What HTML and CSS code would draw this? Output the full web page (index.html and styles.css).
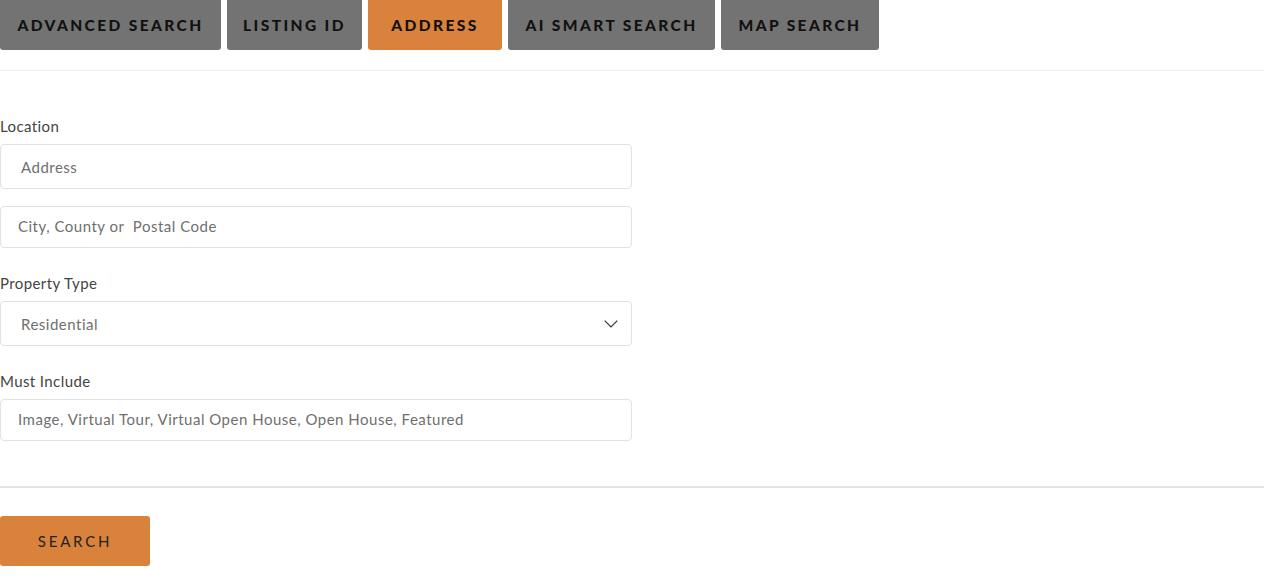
FILE: index.html
```html
<!DOCTYPE html>
<html lang="en">
<head>
<meta charset="utf-8">
<title>Search</title>
<link rel="stylesheet" href="styles.css">
</head>
<body>
<div class="page">
  <nav class="tabs">
    <a class="tab t1">ADVANCED SEARCH</a>
    <a class="tab t2">LISTING ID</a>
    <a class="tab t3 active">ADDRESS</a>
    <a class="tab t4">AI SMART SEARCH</a>
    <a class="tab t5">MAP SEARCH</a>
  </nav>
  <hr class="rule-top">
  <form class="form">
    <div class="group">
      <label class="label">Location</label>
      <div class="field tall"><span class="ph ph-indent">Address</span></div>
      <div class="field short gap"><span class="ph">City, County or &nbsp;Postal Code</span></div>
    </div>
    <div class="group">
      <label class="label">Property Type</label>
      <div class="field tall select">
        <span class="ph ph-indent">Residential</span>
        <svg class="chev" width="14" height="8" viewBox="0 0 14 8"><path d="M0.7 0.7 L7 7 L13.3 0.7" fill="none" stroke="#333" stroke-width="1.2"/></svg>
      </div>
    </div>
    <div class="group last">
      <label class="label">Must Include</label>
      <div class="field short"><span class="ph">Image, Virtual Tour, Virtual Open House, Open House, Featured</span></div>
    </div>
  </form>
  <hr class="rule-bottom">
  <button class="search-btn" type="button">SEARCH</button>
</div>
</body>
</html>
```
FILE: styles.css
```css
* { box-sizing: border-box; }
body {
  margin: 0;
  font-family: Lato, "Noto Sans", sans-serif;
  color: #333;
  background: #fff;
}
.tabs {
  display: flex;
  gap: 6px;
  height: 50px;
}
.tab {
  display: flex;
  align-items: center;
  justify-content: center;
  background: #737373;
  color: #111;
  font-weight: 900;
  font-size: 15.5px;
  letter-spacing: 2.4px;
  border-radius: 0 0 3px 3px;
}
.tab.active { background: #d8823c; }
.t1 { width: 221px; }
.t2 { width: 135px; }
.t3 { width: 134px; }
.t4 { width: 207px; }
.t5 { width: 158px; }
.rule-top {
  margin: 20px 0 0;
  border: 0;
  border-top: 1px solid #ececec;
}
.form {
  width: 632px;
  padding-top: 46px;
}
.group { margin-bottom: 26px; }
.group.last { margin-bottom: 0; }
.label {
  display: block;
  font-size: 15px;
  line-height: 18px;
  color: #444;
  letter-spacing: 0.4px;
  margin-bottom: 9px;
}
.field {
  display: flex;
  align-items: center;
  border: 1px solid #e2e2e2;
  border-radius: 4px;
  padding: 0 17px;
  font-size: 15px;
  letter-spacing: 0.5px;
  color: #6f6f6f;
}
.field.tall { height: 45px; }
.field.short { height: 42px; padding-bottom: 3px; }
.field.gap { margin-top: 17px; }
.ph-indent { padding-left: 3px; }
.select { justify-content: space-between; padding-right: 13px; }
.chev { display: block; }
.rule-bottom {
  margin: 45px 0 0;
  border: 0;
  border-top: 2px solid #e3e3e3;
}
.search-btn {
  display: block;
  margin-top: 28px;
  width: 150px;
  height: 50px;
  background: #d8823c;
  border: 0;
  border-radius: 3px;
  font-family: Lato, "Noto Sans", sans-serif;
  font-size: 15px;
  letter-spacing: 2.8px;
  color: #222;
}
```
